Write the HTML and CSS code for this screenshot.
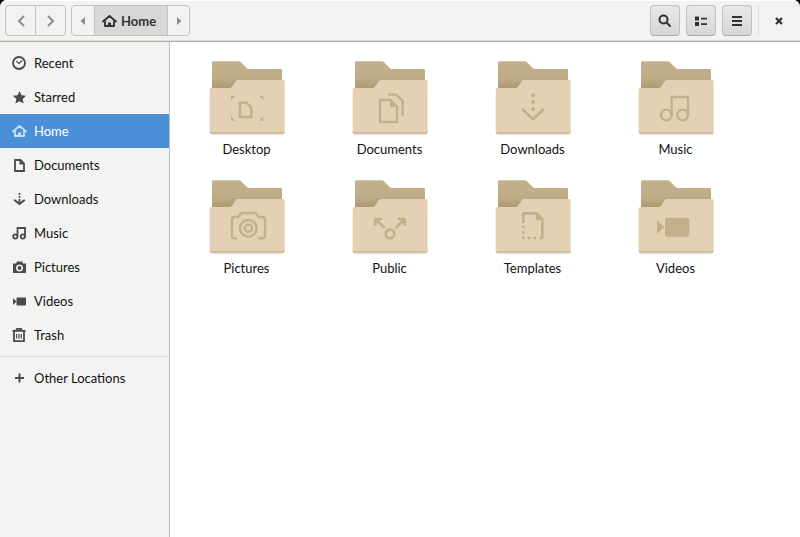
FILE: index.html
```html
<!DOCTYPE html>
<html lang="en">
<head>
<meta charset="utf-8">
<title>Home</title>
<link rel="stylesheet" href="styles.css">
</head>
<body>
<svg class="defs" aria-hidden="true">
  <defs>
    <linearGradient id="back-fill" x1="0" y1="0" x2="0" y2="1">
      <stop offset="0" stop-color="#c3b08c"/><stop offset=".6" stop-color="#c0ac87"/><stop offset=".9" stop-color="#b19d78"/><stop offset="1" stop-color="#ae9a75"/>
    </linearGradient>
    <symbol id="folder" viewBox="27 30 228 228">
      <path d="M30 247h222q0 9-6 9h-210q-6 0-6-9z" fill="#000" opacity=".1"/>
      <path d="M36 116V38q0-4 4-4h76q4 0 7 3l18 18q2 2 5 2h96q4 0 4 4v55z" fill="url(#back-fill)"/>
      <path d="M29 119q0-5 5-5h54q5 0 8-4l10-15q3-5 8-5h135q5 0 5 5v151q0 5-5 5H34q-5 0-5-5z" fill="#e3d0b5"/>
      <path d="M29 243v3q0 5 5 5h215q5 0 5-5v-3q0 4-5 4H34q-5 0-5-4z" fill="#cdb893"/>
    </symbol>
    <symbol id="home" viewBox="0 0 16 16">
      <path d="M2 8.500L8.500 3l6.500 5.500M4 8.500V13h9V8.500" fill="none" stroke="currentColor" stroke-width="1.900" stroke-linejoin="round" stroke-linecap="round"/>
      <path d="M7 13V9.500h3V13z" fill="currentColor"/>
    </symbol>
  </defs>
</svg>
<div class="window">
  <header class="headerbar">
    <div class="group">
      <button class="nav" aria-label="Back"><svg viewBox="0 0 16 16"><path d="M10.500 3.500L6 8l4.500 4.500" class="line thick"/></svg></button>
      <button class="nav" aria-label="Forward"><svg viewBox="0 0 16 16"><path d="M5.500 3.500L10 8l-4.500 4.500" class="line thick"/></svg></button>
    </div>
    <div class="group path">
      <button class="arrow" aria-label="Scroll left"><svg viewBox="0 0 16 16"><path d="M10 4v8L5.500 8z" fill="currentColor"/></svg></button>
      <button class="crumb"><svg viewBox="0 0 16 16"><use href="#home"/></svg>Home</button>
      <button class="arrow" aria-label="Scroll right"><svg viewBox="0 0 16 16"><path d="M6 4v8l4.500-4z" fill="currentColor"/></svg></button>
    </div>
    <div class="tools">
      <button class="tool" aria-label="Search"><svg viewBox="0 0 16 16"><circle cx="6.500" cy="6.500" r="4" class="line thick"/><path d="M9.800 9.800L13 13" class="line thick"/></svg></button>
      <button class="tool" aria-label="View as list"><svg viewBox="0 0 16 16" fill="currentColor"><path d="M2 3.500h4v4H2zM2 9h4v4H2zM8 4.700h6v1.800H8zM8 10.200h6V12H8z"/></svg></button>
      <button class="tool" aria-label="Menu"><svg viewBox="0 0 16 16" fill="currentColor"><path d="M3 3h10v2H3zM3 7h10v2H3zM3 11h10v2H3z"/></svg></button>
      <button class="close" aria-label="Close"><svg viewBox="0 0 16 16"><path d="M5 5l6 6M11 5l-6 6" class="line close-line"/></svg></button>
    </div>
  </header>
  <div class="body">
    <nav class="sidebar" aria-label="Places">
      <a href="#"><svg viewBox="0 0 16 16"><circle cx="8" cy="8" r="6" class="line"/><path d="M5.300 6.300L8 8.500l3-3" class="line thin"/></svg>Recent</a>
      <a href="#"><svg viewBox="0 0 16 16"><path d="M8.500 2l2 4.200 4.500.5-3.300 3.200.9 4.600-4.100-2.300-4.100 2.300.9-4.600L2 6.700l4.500-.5z" fill="currentColor"/></svg>Starred</a>
      <a href="#" class="selected" aria-current="page"><svg viewBox="0 0 16 16"><use href="#home"/></svg>Home</a>
      <a href="#"><svg viewBox="0 0 16 16"><path d="M4 3h5.500L13 6.500V14H4z" class="line"/><path d="M8.500 3v4.500H13z" fill="currentColor"/></svg>Documents</a>
      <a href="#"><svg viewBox="0 0 16 16"><path d="M3.800 9.300L8.500 13l4.700-3.700" class="line thick"/><path d="M7.600 2h1.800v1.800H7.600zM7.600 5h1.800v1.800H7.600zM7.600 8h1.800v4H7.600z" fill="currentColor"/></svg>Downloads</a>
      <a href="#"><svg viewBox="0 0 16 16"><path d="M6.500 11.500V3H14v8.500" class="line"/><circle cx="4.300" cy="11.500" r="2.100" class="line"/><circle cx="11.800" cy="11.500" r="2.100" class="line"/></svg>Music</a>
      <a href="#"><svg viewBox="0 0 16 16"><path fill="currentColor" fill-rule="evenodd" d="M6 2.500h5l1 2h3V14H2V4.500h3zM8.500 5.500a3.500 3.500 0 1 0 0 7 3.500 3.500 0 0 0 0-7z"/><circle cx="8.500" cy="9" r="1.900" fill="currentColor"/></svg>Pictures</a>
      <a href="#"><svg viewBox="0 0 16 16" fill="currentColor"><path d="M2 5l3.500 3.500L2 12z"/><rect x="5.500" y="4.500" width="9.500" height="8" rx="1"/></svg>Videos</a>
      <a href="#"><svg viewBox="0 0 16 16"><path d="M1.500 3.800h13M5 3.500l1-1.700h4l1 1.700M3 4.500V14.200h10V4.500" class="line"/><path d="M5.700 7v4.500M8 7v4.500M10.300 7v4.500" class="line thin"/></svg>Trash</a>
      <hr>
      <a href="#"><svg viewBox="0 0 16 16"><path d="M8.500 3.500v9M4 8h9" class="line thick square"/></svg>Other Locations</a>
    </nav>
    <main class="files">
      <a href="#"><svg viewBox="27 30 228 228"><use href="#folder" x="27" y="30" width="228" height="228"/><g class="emblem"><path d="M120 158h19l15 15v28h-34z"/><path class="solid" d="M93 138h13l-13 13zM190 138h-13l13 13zM93 212v-13l13 13zM190 212v-13l-13 13z"/></g></svg><span>Desktop</span></a>
      <a href="#"><svg viewBox="27 30 228 228"><use href="#folder" x="27" y="30" width="228" height="228"/><g class="emblem"><path d="M111 150h31l20 20v46h-51z"/><path class="solid" d="M141 148v24h24z"/><path d="M134 134h26l19 19v45"/></g></svg><span>Documents</span></a>
      <a href="#"><svg viewBox="27 30 228 228"><use href="#folder" x="27" y="30" width="228" height="228"/><g class="emblem"><g class="solid"><circle cx="141" cy="136" r="6"/><circle cx="141" cy="156" r="6"/><circle cx="141" cy="177" r="6"/></g><path class="heavy" d="M111 179l30 29 30-29"/></g></svg><span>Downloads</span></a>
      <a href="#"><svg viewBox="27 30 228 228"><use href="#folder" x="27" y="30" width="228" height="228"/><g class="emblem"><path d="M128 194v-53h49v53"/><circle cx="112" cy="195" r="16"/><circle cx="161" cy="195" r="16"/></g></svg><span>Music</span></a>
      <a href="#"><svg viewBox="27 30 228 228"><use href="#folder" x="27" y="30" width="228" height="228"/><g class="emblem"><path d="M112 208h-8q-8 0-8-8v-48q0-8 8-8h11l10-12h41l10 12h11q8 0 8 8v48q0 8-8 8h-12"/><circle cx="145" cy="178" r="25"/><circle cx="145" cy="178" r="11"/></g></svg><span>Pictures</span></a>
      <a href="#"><svg viewBox="27 30 228 228"><use href="#folder" x="27" y="30" width="228" height="228"/><g class="emblem"><circle class="heavy" cx="141" cy="195" r="13"/><path class="heavy flat" d="M97 170v-20h21M185 170v-20h-21M98 151l26 25M184 151l-26 25"/></g></svg><span>Public</span></a>
      <a href="#"><svg viewBox="27 30 228 228"><use href="#folder" x="27" y="30" width="228" height="228"/><g class="emblem"><path class="heavy flat" d="M112 162v-29h40l17 18v56h-8"/><path class="solid" d="M150 131v23h23zM108 170h8v8h-8zM108 187h8v8h-8zM108 203h8v8h-8zM125 203h8v8h-8zM142 203h8v8h-8z"/></g></svg><span>Templates</span></a>
      <a href="#"><svg viewBox="27 30 228 228"><use href="#folder" x="27" y="30" width="228" height="228"/><g class="emblem"><path class="solid" d="M84 153l22 21-22 21z"/><rect class="solid" x="108" y="146" width="73" height="57" rx="7"/></g></svg><span>Videos</span></a>
    </main>
  </div>
</div>
</body>
</html>
```
FILE: styles.css
```css
* {
  box-sizing: border-box;
}

body {
  margin: 0;
  background: #000;
  color: #101213;
  font: 13px/18px Lato, "Noto Sans", sans-serif;
}

a {
  color: inherit;
  text-decoration: none;
}

button {
  padding: 0;
  border: 0;
  background: none;
  color: #2e3436;
  font: inherit;
}

svg {
  display: block;
  flex: none;
}

.defs {
  position: absolute;
  width: 0;
  height: 0;
}

.window {
  display: flex;
  flex-direction: column;
  min-height: 100vh;
  overflow: hidden;
  border-radius: 7px 7px 0 0;
  background: #fff;
}

.headerbar {
  display: flex;
  align-items: center;
  gap: 5px;
  height: 42px;
  padding: 0 6px 0 5px;
  border-bottom: 1px solid #acada8;
  background: #f2f2f2;
  box-shadow: inset 0 1px #fff, inset 0 -1px #dddeda;
}

.headerbar svg,
.sidebar svg {
  width: 16px;
  height: 16px;
}

.line {
  fill: none;
  stroke: currentColor;
  stroke-width: 1.8;
}

.thick {
  stroke-width: 2;
  stroke-linecap: round;
}

.square {
  stroke-linecap: butt;
}

.thin {
  stroke-width: 1.2;
}

.close-line {
  stroke-width: 2.2;
}

.group {
  display: flex;
  height: 31px;
  overflow: hidden;
  border: 1px solid #c3c3c1;
  border-radius: 4px;
}

.group button {
  display: flex;
  align-items: center;
  justify-content: center;
}

.group button + button {
  border-left: 1px solid #c3c3c1;
}

.nav {
  width: 29px;
  color: #8b8e8f;
}

.nav + .nav {
  width: 30px;
}

.group .arrow {
  width: 22px;
  color: #8b8e8f;
}

.group .crumb {
  gap: 4px;
  padding: 0 11px 0 6px;
  background: #d8d8d6;
  font-weight: 700;
}

.tools {
  display: flex;
  align-items: center;
  gap: 6px;
  margin-left: auto;
}

.tool {
  display: flex;
  align-items: center;
  justify-content: center;
  width: 30px;
  height: 31px;
  border: 1px solid #c0c0bd;
  border-bottom-color: #a9aaa6;
  border-radius: 4px;
  background: linear-gradient(#e8e8e7, #d6d6d4);
}

.close {
  display: flex;
  align-items: center;
  justify-content: center;
  width: 36px;
  height: 31px;
  padding-left: 4px;
  border-left: 1px solid #dededd;
}

.body {
  display: flex;
  flex: 1;
}

.sidebar {
  flex: none;
  width: 170px;
  padding-top: 4px;
  border-right: 1px solid #bebfbb;
  background: #f3f3f2;
}

.sidebar a {
  display: flex;
  align-items: center;
  gap: 7px;
  height: 34px;
  padding: 0 0 1px 11px;
}

.sidebar svg {
  color: #4a4c4c;
}

.sidebar .selected {
  background: #4a90d9;
  color: #fff;
}

.sidebar .selected svg {
  color: #c8def4;
}

.sidebar hr {
  height: 1px;
  margin: 4px 0;
  border: 0;
  background: #d8d9d6;
}

.files {
  display: grid;
  flex: 1;
  grid-template-columns: repeat(auto-fill, 143px);
  grid-auto-rows: 119px;
  align-content: start;
  padding: 18px 5px;
}

.files a {
  display: flex;
  flex-direction: column;
  align-items: center;
  gap: 4px;
}

.files svg {
  width: 76px;
  height: 76px;
}

.emblem {
  fill: none;
  stroke: #c5af8b;
  stroke-width: 7;
  stroke-linejoin: round;
}

.emblem .heavy {
  stroke-width: 8;
  stroke-linecap: round;
}

.emblem .flat {
  stroke-linecap: butt;
}

.emblem .solid {
  fill: #c5af8b;
  stroke: none;
}
```
